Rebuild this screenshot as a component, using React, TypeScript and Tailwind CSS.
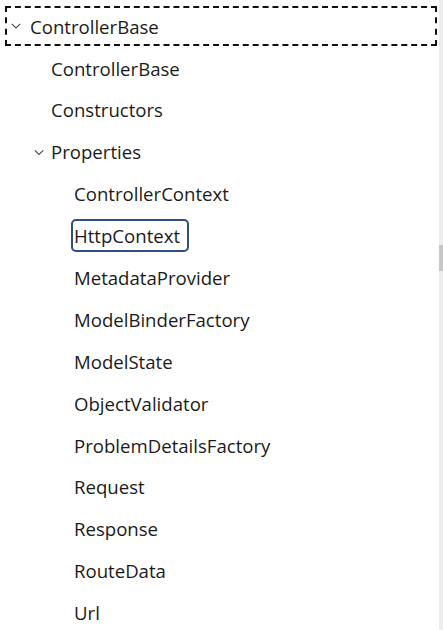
import React from "react";

const Chevron = () => (
  <svg width="10" height="6" viewBox="0 0 10 6" className="shrink-0">
    <path d="M0.8 0.8 L5 5 L9.2 0.8" fill="none" stroke="#4a4a4a" strokeWidth="1.1" />
  </svg>
);

type Item = { label: string; level: number; chevron?: boolean; focus?: boolean; selected?: boolean };

const items: Item[] = [
  { label: "ControllerBase", level: 0, chevron: true, focus: true },
  { label: "ControllerBase", level: 1 },
  { label: "Constructors", level: 1 },
  { label: "Properties", level: 1, chevron: true },
  { label: "ControllerContext", level: 2 },
  { label: "HttpContext", level: 2, selected: true },
  { label: "MetadataProvider", level: 2 },
  { label: "ModelBinderFactory", level: 2 },
  { label: "ModelState", level: 2 },
  { label: "ObjectValidator", level: 2 },
  { label: "ProblemDetailsFactory", level: 2 },
  { label: "Request", level: 2 },
  { label: "Response", level: 2 },
  { label: "RouteData", level: 2 },
  { label: "Url", level: 2 },
];

const padFor = (l: number) => (l === 0 ? "pl-[28px]" : l === 1 ? "pl-[51px]" : "pl-[74px]");

export default function App() {
  return (
    <div
      className="w-[443px] h-[630px] bg-white flex overflow-hidden text-[#1b1b1b]"
      style={{ fontFamily: '"Open Sans", "Noto Sans", sans-serif' }}
    >
      <div className="flex-1 flex flex-col pt-[5px]">
        {items.map((it, i) => (
          <div key={i} className="h-[41.9px] shrink-0 flex items-center">
            {it.focus ? (
              <div className="h-[40px] flex-1 ml-[5px] mr-[2px] border-2 border-dashed border-[#111] flex items-center pl-[3px]">
                <span className="w-[20px] flex justify-start items-center pl-[1px]">
                  <Chevron />
                </span>
                <span className="text-[18.6px] leading-none pt-[2px]">{it.label}</span>
              </div>
            ) : (
              <div className={`relative flex items-center ${padFor(it.level)}`}>
                {it.chevron && (
                  <span className="absolute left-[34px] top-1/2 -translate-y-1/2 flex pt-[1px]">
                    <Chevron />
                  </span>
                )}
                {it.selected ? (
                  <span className="ml-[-3px] h-[33px] pl-[1px] pr-[7px] pt-[2px] flex items-center border-2 border-[#2e4f82] rounded-[5px] text-[18.6px] leading-none">
                    {it.label}
                  </span>
                ) : (
                  <span className="text-[18.6px] leading-none pt-[2px]">{it.label}</span>
                )}
              </div>
            )}
          </div>
        ))}
      </div>
      <div className="w-[4px] bg-[#ededed] flex flex-col pt-[245px]">
        <div className="h-[26px] bg-[#c6c6c6]" />
      </div>
    </div>
  );
}
